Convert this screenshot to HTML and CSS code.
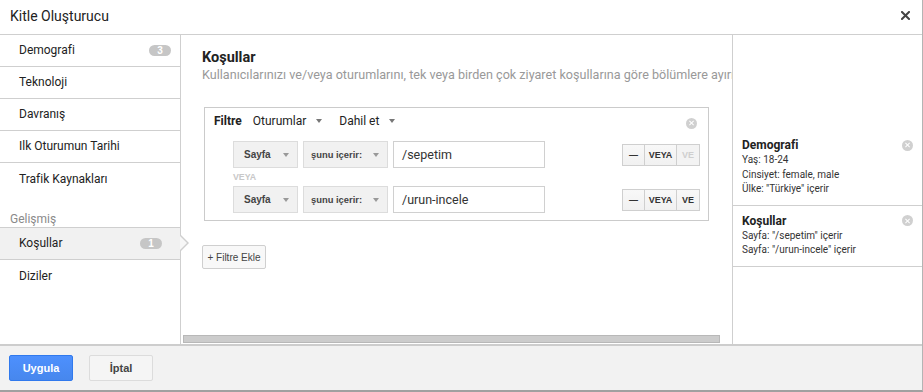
FILE: index.html
```html
<!DOCTYPE html>
<html lang="tr">
<head>
<meta charset="utf-8">
<title>Kitle Oluşturucu</title>
<link rel="stylesheet" href="styles.css">
</head>
<body>
<div class="dialog">
  <header class="header">
    <h1 class="title">Kitle Oluşturucu</h1>
    <svg class="close" width="9" height="9" viewBox="0 0 9 9" aria-label="Kapat"><path d="M1 1 L8 8 M8 1 L1 8" stroke="#444" stroke-width="2" stroke-linecap="square"/></svg>
  </header>
  <div class="body">
    <nav class="sidebar">
      <div class="nav-item bordered"><span>Demografi</span><span class="badge">3</span></div>
      <div class="nav-item bordered"><span>Teknoloji</span></div>
      <div class="nav-item bordered"><span>Davranış</span></div>
      <div class="nav-item bordered"><span>Ilk Oturumun Tarihi</span></div>
      <div class="nav-item"><span>Trafik Kaynakları</span></div>
      <div class="nav-label">Gelişmiş</div>
      <div class="nav-item active"><span>Koşullar</span><span class="badge badge-active">1</span><span class="pointer"></span></div>
      <div class="nav-item"><span>Diziler</span></div>
    </nav>
    <main class="main">
      <div class="main-content">
        <h2 class="heading">Koşullar</h2>
        <p class="subtitle">Kullanıcılarınızı ve/veya oturumlarını, tek veya birden çok ziyaret koşullarına göre bölümlere ayırın.</p>
        <div class="filter">
          <div class="filter-head">
            <span class="filter-label">Filtre</span>
            <span class="drop">Oturumlar <span class="caret"></span></span>
            <span class="drop">Dahil et <span class="caret"></span></span>
            <span class="spacer"></span>
            <span class="x-circle"></span>
          </div>
          <div class="cond-row">
            <span class="select sel-dim">Sayfa <span class="caret light"></span></span>
            <span class="select sel-op">şunu içerir: <span class="caret light"></span></span>
            <span class="input">/sepetim</span>
            <span class="spacer"></span>
            <span class="seg"><span class="seg-btn seg-minus">—</span><span class="seg-btn seg-or">VEYA</span><span class="seg-btn seg-and disabled">VE</span></span>
          </div>
          <div class="or-label">VEYA</div>
          <div class="cond-row">
            <span class="select sel-dim">Sayfa <span class="caret light"></span></span>
            <span class="select sel-op">şunu içerir: <span class="caret light"></span></span>
            <span class="input">/urun-incele</span>
            <span class="spacer"></span>
            <span class="seg"><span class="seg-btn seg-minus">—</span><span class="seg-btn seg-or">VEYA</span><span class="seg-btn seg-and">VE</span></span>
          </div>
        </div>
        <button class="add-btn">+ Filtre Ekle</button>
      </div>
      <div class="hscroll"></div>
    </main>
    <aside class="summary">
      <div class="sum-section first">
        <div class="sum-head"><span class="sum-title">Demografi</span><span class="x-circle"></span></div>
        <div class="sum-line">Yaş: 18-24</div>
        <div class="sum-line">Cinsiyet: female, male</div>
        <div class="sum-line">Ülke: "Türkiye" içerir</div>
      </div>
      <div class="sum-section">
        <div class="sum-head"><span class="sum-title">Koşullar</span><span class="x-circle"></span></div>
        <div class="sum-line">Sayfa: "/sepetim" içerir</div>
        <div class="sum-line">Sayfa: "/urun-incele" içerir</div>
      </div>
    </aside>
  </div>
  <footer class="footer">
    <button class="btn btn-primary">Uygula</button>
    <button class="btn btn-default">İptal</button>
  </footer>
</div>
</body>
</html>
```
FILE: styles.css
```css
* { box-sizing: border-box; }
html, body { margin: 0; padding: 0; background: #fff; }
body { font-family: Roboto, "Liberation Sans", Arial, sans-serif; color: #222; }

.dialog {
  width: 923px;
  height: 392px;
  border-right: 1px solid #b4b4b4;
  border-bottom: 2px solid #a0a0a0;
  display: flex;
  flex-direction: column;
  overflow: hidden;
}

.header {
  height: 35px;
  border-bottom: 1px solid #cfcfcf;
  display: flex;
  align-items: center;
  padding: 0 12px 0 10px;
  flex: none;
}
.title { margin: 0; font-size: 14px; font-weight: 400; color: #222; flex: 1; line-height: 16px; padding-bottom: 2px; }
.close { display: block; margin-bottom: 4px; }

.body { flex: 1; display: flex; min-height: 0; }

.sidebar {
  width: 181px;
  border-right: 1px solid #cfcfcf;
  flex: none;
  font-size: 12px;
  color: #222;
}
.nav-item {
  height: 32px;
  display: flex;
  align-items: center;
  justify-content: space-between;
  padding: 0 9px 1px 19px;
  position: relative;
}
.nav-item.bordered { border-bottom: 1px solid #cfcfcf; }
.nav-item.active {
  background: #f1f1f1;
  border-top: 1px solid #cfcfcf;
  border-bottom: 1px solid #cfcfcf;
  height: 33px;
  padding-right: 18px;
}
.nav-label {
  height: 32px;
  padding: 16px 0 0 10px;
  line-height: 16px;
  color: #8a8a8a;
  font-size: 12px;
}
.badge {
  background: #c6c6c6;
  color: #fff;
  font-family: "Liberation Sans", Arial, sans-serif;
  font-weight: bold;
  font-size: 10px;
  line-height: 11px;
  height: 11px;
  width: 22px;
  border-radius: 6px;
  text-align: center;
}
.pointer {
  position: absolute;
  right: -9px;
  top: 7px;
  width: 0; height: 0;
  border-top: 8px solid transparent;
  border-bottom: 8px solid transparent;
  border-left: 8px solid #cfcfcf;
}
.pointer::after {
  content: "";
  position: absolute;
  left: -9px;
  top: -7px;
  border-top: 7px solid transparent;
  border-bottom: 7px solid transparent;
  border-left: 7px solid #f7f7f7;
}

.main {
  width: 552px;
  border-right: 1px solid #cfcfcf;
  flex: none;
  display: flex;
  flex-direction: column;
  overflow: hidden;
}
.main-content { flex: 1; padding: 14px 0 0 21px; min-height: 0; }
.heading { margin: 0; font-size: 14.5px; font-weight: bold; line-height: 18px; color: #222; }
.subtitle {
  margin: 0;
  font-size: 12.6px;
  line-height: 16px;
  color: #999;
  white-space: nowrap;
}
.filter {
  margin: 24px 0 0 2px;
  width: 505px;
  height: 114px;
  border: 1px solid #cbcbcb;
  padding: 0 8px 0 9px;
}
.filter-head {
  height: 24px;
  display: flex;
  align-items: center;
  margin-top: 1px;
  margin-bottom: 8px;
}
.filter-label { font-size: 12px; font-weight: bold; color: #222; margin-right: 11px; }
.drop { font-size: 12px; color: #222; display: inline-flex; align-items: center; margin-right: 17px; }
.caret {
  display: inline-block;
  width: 0; height: 0;
  border-left: 3.5px solid transparent;
  border-right: 3.5px solid transparent;
  border-top: 4px solid #777;
  margin-left: 10px;
}
.caret.light { border-top-color: #999; }
.spacer { flex: 1; }
.x-circle {
  width: 11px; height: 11px;
  border-radius: 50%;
  background: #d0d0d0;
  position: relative;
  flex: none;
}
.x-circle::before, .x-circle::after {
  content: "";
  position: absolute;
  left: 5px; top: 2.5px;
  width: 1.2px; height: 6px;
  background: #fff;
  transform: rotate(45deg);
}
.x-circle::after { transform: rotate(-45deg); }
.filter-head .x-circle { margin-right: 3px; margin-top: 4px; }

.cond-row {
  height: 27px;
  display: flex;
  align-items: center;
  padding-left: 19px;
}
.select {
  height: 27px;
  background: #f1f1f1;
  border: 1px solid #dcdcdc;
  display: flex;
  align-items: center;
  justify-content: space-between;
  font-family: "Liberation Sans", Arial, sans-serif;
  font-weight: bold;
  font-size: 10px;
  color: #444;
  margin-right: 5px;
  padding: 0 8px 0 10px;
  white-space: nowrap;
}
.sel-dim { width: 65px; }
.sel-op { width: 85px; padding-left: 7px; font-size: 9.4px; }
.input {
  height: 27px;
  width: 152px;
  border: 1px solid #d0d0d0;
  display: flex;
  align-items: center;
  padding-left: 8px;
  font-size: 12.5px;
  color: #333;
}
.or-label {
  height: 18px;
  line-height: 18px;
  padding-left: 19px;
  font-family: "Liberation Sans", Arial, sans-serif;
  font-weight: bold;
  font-size: 8.8px;
  color: #c8c8c8;
}
.seg { display: flex; height: 22px; }
.seg-btn {
  height: 22px;
  border: 1px solid #cfcfcf;
  margin-left: -1px;
  background: linear-gradient(#f8f8f8, #f1f1f1);
  display: flex;
  align-items: center;
  justify-content: center;
  font-family: "Liberation Sans", Arial, sans-serif;
  font-weight: bold;
  font-size: 9px;
  color: #333;
}
.seg-minus { width: 23px; margin-left: 0; font-size: 9px; }
.seg-or { width: 33px; }
.seg-and { width: 24px; }
.seg-and.disabled { color: #cfcfcf; background: #f3f3f3; }

.add-btn {
  margin: 24px 0 0 0;
  width: 64px;
  height: 24px;
  border: 1px solid #cfcfcf;
  border-radius: 2px;
  background: #f8f8f8;
  font-family: "Liberation Sans", Arial, sans-serif;
  font-size: 10px;
  color: #444;
  padding: 0;
  display: block;
}

.hscroll {
  flex: none;
  height: 8px;
  width: 537px;
  margin: 0 0 1px 2px;
  background: #cccccc;
  border: 1px solid #b8b8b8;
}

.summary { flex: 1; padding-top: 95px; }
.sum-section {
  padding: 7px 9px 8px 9px;
  border-bottom: 1px solid #cfcfcf;
}
.sum-head { display: flex; align-items: center; justify-content: space-between; height: 16px; }
.sum-title { font-size: 12px; font-weight: bold; color: #222; }
.sum-line { font-size: 10px; line-height: 14.5px; color: #333; }

.footer {
  flex: none;
  height: 46px;
  background: #f2f2f2;
  border-top: 2px solid #cdcdcd;
  display: flex;
  align-items: flex-start;
  gap: 16px;
  padding: 9px 0 0 9px;
}
.btn {
  width: 64px;
  height: 26px;
  border-radius: 2px;
  font-family: "Liberation Sans", Arial, sans-serif;
  font-weight: bold;
  font-size: 11px;
  padding: 0;
}
.btn-primary {
  background: linear-gradient(#4d90fe, #4787ed);
  border: 1px solid #3079ed;
  color: #fff;
}
.btn-default {
  background: #f5f5f5;
  border: 1px solid #dcdcdc;
  color: #444;
}
```
